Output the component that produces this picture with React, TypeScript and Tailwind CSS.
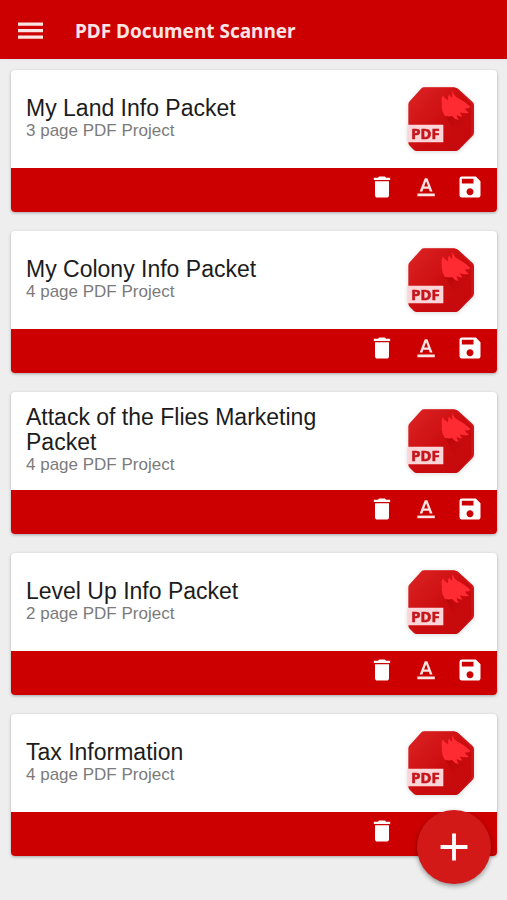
import { MdAdd, MdDelete, MdSave } from "react-icons/md";

type Project = {
  name: string;
  pages: number;
};

const projects: Project[] = [
  { name: "My Land Info Packet", pages: 3 },
  { name: "My Colony Info Packet", pages: 4 },
  { name: "Attack of the Flies Marketing Packet", pages: 4 },
  { name: "Level Up Info Packet", pages: 2 },
  { name: "Tax Information", pages: 4 },
];

const MenuIcon: React.FC = () => (
  <svg viewBox="0 0 34 34" className="size-[34px]" fill="currentColor" aria-hidden="true">
    <path d="M5 7.6h25v3.2H5zM5 14.1h25v3.2H5zM5 20.6h25v3.2H5z" />
  </svg>
);

const RenameIcon: React.FC = () => (
  <svg viewBox="0 0 28 28" className="size-7" fill="currentColor" aria-hidden="true">
    <path d="M5.4 20.6h17.4v2.6H5.4z" />
    <path fillRule="evenodd" d="M11.4 15.8h5.4l1 2.7h2.7L15.4 5.2h-2.6L7.7 18.5h2.7l1-2.7zM14.1 8.2l2 5.4h-4l2-5.4z" />
  </svg>
);

const PdfIcon: React.FC = () => (
  <svg viewBox="38 33 204 204" className="size-[68px] shrink-0 drop-shadow-sm" role="img" aria-label="PDF">
    <defs>
      <linearGradient id="sheet" x1="0" y1="0" x2="1" y2="1">
        <stop offset="0" stopColor="#dc2424" />
        <stop offset="0.55" stopColor="#cb0c0f" />
        <stop offset="1" stopColor="#c4080b" />
      </linearGradient>
      <linearGradient id="fold" x1="0" y1="0" x2="1" y2="1">
        <stop offset="0" stopColor="#9c0000" stopOpacity="0.6" />
        <stop offset="0.7" stopColor="#c4080b" stopOpacity="0" />
      </linearGradient>
    </defs>
    <path d="M90 38h92q6 0 10 4l42 38q5 4 5 10v82q0 6-4 10l-40 41q-5 5-12 5H90z" fill="#d01519" />
    <path
      d="M80 41q4-4 9-4h88q6 0 10 4l40 42q4 4 4 9v84q0 5-4 9l-34 38q-4 5-10 5H67q-5 0-9-4l-12-12q-4-4-4-9V88q0-5 4-9z"
      fill="url(#sheet)"
    />
    <path d="M152 118l24 6 20 12 35-34v74l-33 38z" fill="url(#fold)" />
    <path
      d="M175 47q2 14 16 22 20 10 38 27-8 6-18 4 4 8 13 13-14 4-27-1 1 7 7 12-10 1-17-5 0 8 6 16-14-3-20-12-10 3-22-1-9-12-9-28 2-6 0-12-1-12 3-21 5 10 16 15-1-10 3-18 3 7 9 10 0-11 2-21z"
      fill="#ff2b32"
    />
    <path d="M39 149h108v53H39z" fill="#fbd5d7" />
    <text
      x="51"
      y="192"
      fill="#c5161c"
      stroke="#c5161c"
      strokeWidth="2"
      className="font-['Open_Sans',sans-serif] text-[44px] font-bold"
    >
      PDF
    </text>
  </svg>
);

const ProjectCard: React.FC<{ project: Project }> = ({ project }) => {
  return (
    <li className="group overflow-hidden rounded bg-white shadow-[0_1px_3px_rgba(0,0,0,0.3)]">
      <div className="flex min-h-[98px] items-center justify-between pt-[2px] pr-[22px] pl-[15px]">
        <div className="max-w-[320px] pb-1">
          <h2 className="text-[23px] leading-[25px] text-[#1c1c1c]">{project.name}</h2>
          <p className="text-[17px] leading-5 text-[#7b7b7b]">{project.pages} page PDF Project</p>
        </div>
        <PdfIcon />
      </div>
      <div className="flex h-11 items-start justify-end gap-4 bg-[#cc0000] pt-[5px] pr-[13px] text-white">
        <button type="button" aria-label={`Delete ${project.name}`}>
          <MdDelete className="size-7" />
        </button>
        {/* the floating button sits over this one on the last card */}
        <button
          type="button"
          aria-label={`Rename ${project.name}`}
          className="text-[#fbe4e4] group-last:invisible"
        >
          <RenameIcon />
        </button>
        <button type="button" aria-label={`Save ${project.name}`}>
          <MdSave className="size-7" />
        </button>
      </div>
    </li>
  );
};

export default function App() {
  return (
    <div className="min-h-screen bg-[#eeeeee] font-['Liberation_Sans',Arial,sans-serif]">
      <header className="flex h-[59px] items-center gap-7 bg-[#cc0000] px-[13px] pt-1 text-[#fbe4e4] shadow-xs">
        <button type="button" aria-label="Open menu">
          <MenuIcon />
        </button>
        <h1 className="font-['Noto_Sans',sans-serif] text-[19px] font-bold">PDF Document Scanner</h1>
      </header>

      <main className="pt-[11px] pr-[10px] pb-11 pl-[11px]">
        <ul className="flex flex-col gap-[19px]">
          {projects.map((project) => (
            <ProjectCard key={project.name} project={project} />
          ))}
        </ul>
      </main>

      <button
        type="button"
        aria-label="New project"
        className="fixed right-4 bottom-4 flex size-[74px] items-center justify-center rounded-full bg-[#d31818] text-white shadow-[0_2px_5px_rgba(0,0,0,0.4)]"
      >
        <MdAdd className="size-[46px]" />
      </button>
    </div>
  );
}
